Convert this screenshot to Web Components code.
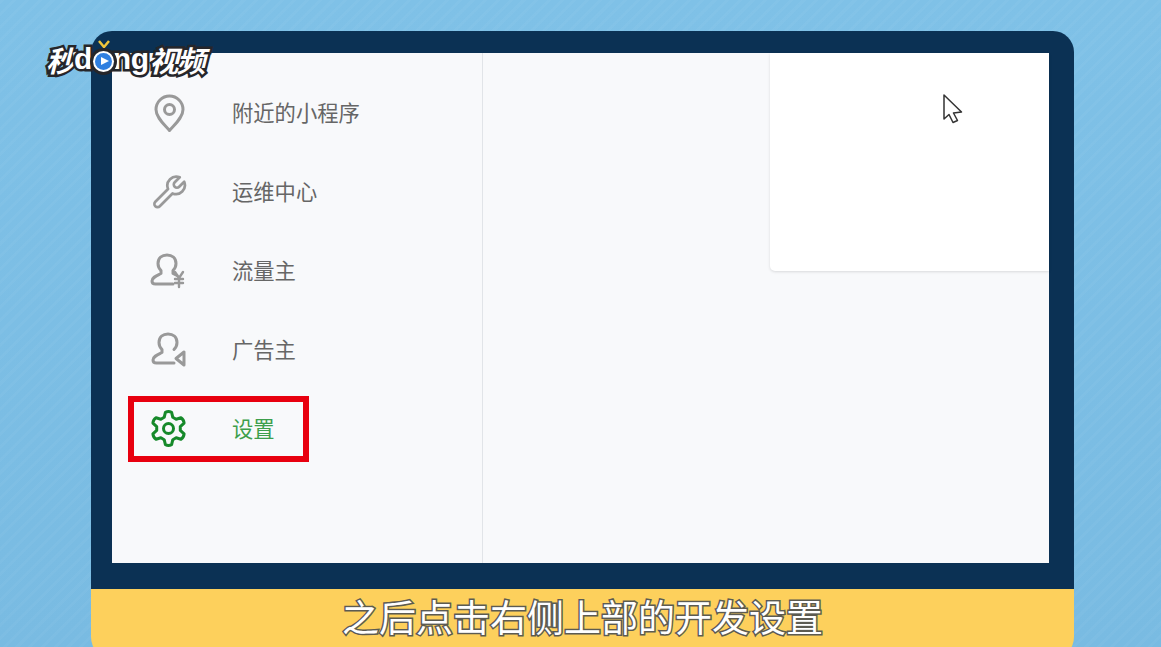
<!DOCTYPE html>
<html lang="zh-CN">
<head>
<meta charset="utf-8">
<title>设置</title>
<style>
  html, body { margin: 0; height: 647px; overflow: hidden; }
  body {
    background:
      repeating-linear-gradient(135deg, rgba(255,255,255,.03) 0 3px, rgba(255,255,255,0) 3px 9px),
      linear-gradient(180deg, #7fc1e7, #79bbe2);
    font-family: "Noto Sans CJK SC", "Liberation Sans", sans-serif;
  }
</style>
</head>
<body>

<video-stage>
  <brand-logo slot="logo"></brand-logo>
  <device-frame>
    <side-nav slot="side">
      <nav-item icon="pin">附近的小程序</nav-item>
      <nav-item icon="wrench">运维中心</nav-item>
      <nav-item icon="flow">流量主</nav-item>
      <nav-item icon="ad">广告主</nav-item>
      <nav-item icon="gear" active marked>设置</nav-item>
    </side-nav>
    <main-panel slot="main"></main-panel>
  </device-frame>
  <sub-title>之后点击右侧上部的开发设置</sub-title>
</video-stage>

<script>
// six lobes, round like the wechat settings gear
function gearPath(cx, cy, outer, inner) {
  let d = '';
  for (let i = 0; i < 6; i++) {
    const a = (i * 60 - 30) * Math.PI / 180;
    const pt = (ang, r) => (cx + r * Math.cos(ang)).toFixed(1) + ' ' + (cy + r * Math.sin(ang)).toFixed(1);
    const step = 11 * Math.PI / 180;
    d += (i === 0 ? 'M' : 'L') + pt(a - step * 1.9, inner);
    d += ' L' + pt(a - step, outer) + ' Q' + pt(a, outer + 1.2) + ' ' + pt(a + step, outer);
    d += ' L' + pt(a + step * 1.9, inner) + ' ';
  }
  return d + 'Z';
}

const personPath = 'M25 33H7.5Q4 33 4 30C4 26.5 8 25 13 22.5V19.5C11 17.5 10 15 10 12.5C10 7 14 4 19 4S28 7 28 12.5C28 15 27 17.5 25 19.5V22.5L29 24.5';

const ICONS = {
  pin: `<path d="M21.5 37.5C17 32 8 25 8 16.5A13.5 13.5 0 0 1 35 16.5C35 25 26 32 21.5 37.5Z"/><circle cx="21.5" cy="16.5" r="5"/>`,
  wrench: `<g transform="translate(21 20.5) rotate(45) scale(.9) translate(0 -2)"><path d="M-3.5 -18.4V-10.5A3.5 3.5 0 0 0 3.5 -10.5V-18.4A10 10 0 0 1 3.5 0V20A3.5 3.5 0 0 1 -3.5 20V0A10 10 0 0 1 -3.5 -18.4Z"/></g>`,
  flow: `<path d="${personPath}"/><path d="M27 21L31 27L35 21M31 27V36M27 28H35M27 32H35" stroke-width="2.4"/>`,
  ad: `<g transform="translate(1 0)"><path d="M25 33H7.5Q4 33 4 30C4 26.5 8 25 13 22.5V19.5C11 17.5 10 15 10 12.5C10 7 14 4 19 4S28 7 28 12.5C28 15 27 17.5 25 19.5"/></g><path d="M36 22V35L28 28.5Z"/>`,
  gear: `<path d="${gearPath(20.5, 19.5, 16.5, 12)}"/><circle cx="20.5" cy="19.5" r="5"/>`
};

class VideoStage extends HTMLElement {
  constructor() {
    super();
    this.attachShadow({ mode: 'open' });
    this.shadowRoot.innerHTML = `
      <style>
        :host { display: block; position: relative; height: 647px; padding: 31px 87px 0 91px; box-sizing: border-box; overflow: hidden; }
        .logo { position: absolute; left: 44px; top: 38px; z-index: 2; }
      </style>
      <div class="logo"><slot name="logo"></slot></div>
      <slot></slot>
    `;
  }
}

class DeviceFrame extends HTMLElement {
  constructor() {
    super();
    this.attachShadow({ mode: 'open' });
    this.shadowRoot.innerHTML = `
      <style>
        :host { display: block; background: #0b3154; border-radius: 21px 21px 0 0; padding: 22px 25px 26px 21px; }
        .screen { display: flex; height: 510px; background: #f8f9fb; }
      </style>
      <div class="screen">
        <slot name="side"></slot>
        <slot name="main"></slot>
      </div>
    `;
  }
}

class SideNav extends HTMLElement {
  constructor() {
    super();
    this.attachShadow({ mode: 'open' });
    this.shadowRoot.innerHTML = `
      <style>
        :host { display: flex; flex-direction: column; box-sizing: border-box; width: 371px; padding-top: 20px; border-right: 1px solid #e1e4e8; }
      </style>
      <slot></slot>
    `;
  }
}

class NavItem extends HTMLElement {
  constructor() {
    super();
    this.attachShadow({ mode: 'open' });
  }

  connectedCallback() {
    const icon = ICONS[this.getAttribute('icon')];
    this.shadowRoot.innerHTML = `
      <style>
        :host { display: flex; align-items: center; position: relative; height: 79.2px; padding-left: 36px; gap: 44px; font-size: 21.3px; color: #666; }
        :host([active]) { color: #3d9f4c; }
        svg { width: 40px; height: 40px; fill: none; stroke: #999; stroke-width: 3; stroke-linejoin: round; stroke-linecap: round; flex: none; filter: blur(.3px); }
        :host([active]) svg { stroke: #16892a; }
        span { margin-top: -3px; }
        .mark { position: absolute; left: 16px; top: 6px; width: 181px; height: 66px; box-sizing: border-box; border: 6px solid #e8000f; }
      </style>
      <svg viewBox="0 0 40 40">${icon}</svg>
      <span><slot></slot></span>
      ${this.hasAttribute('marked') ? '<div class="mark"></div>' : ''}
    `;
  }
}

class MainPanel extends HTMLElement {
  constructor() {
    super();
    this.attachShadow({ mode: 'open' });
    this.shadowRoot.innerHTML = `
      <style>
        :host { display: flex; justify-content: flex-end; align-items: flex-start; flex: 1; position: relative; }
        .card { width: 279px; height: 218px; background: #fff; border-radius: 0 0 0 5px; box-shadow: 0 1px 3px rgba(0,0,0,.13); }
        svg { position: absolute; left: 460px; top: 41px; width: 20px; height: 30px; }
      </style>
      <div class="card"></div>
      <svg viewBox="0 0 20 30"><path d="M1 1V25L6 20.5L10 28.5L14.5 26.5L10.5 19L18.5 18Z" fill="#fff" stroke="#333" stroke-width="1.5" stroke-linejoin="round"/></svg>
    `;
  }
}

class SubTitle extends HTMLElement {
  constructor() {
    super();
    this.attachShadow({ mode: 'open' });
    this.shadowRoot.innerHTML = `
      <style>
        :host { display: flex; justify-content: center; align-items: flex-start; box-sizing: border-box; height: 70px; background: #fdd05c; border-radius: 0 0 22px 22px; font-size: 37px; line-height: 54px; color: #fff; -webkit-text-stroke: 3px #5c5b52; paint-order: stroke fill; white-space: nowrap; }
      </style>
      <slot></slot>
    `;
  }
}

class BrandLogo extends HTMLElement {
  constructor() {
    super();
    this.attachShadow({ mode: 'open' });
    this.shadowRoot.innerHTML = `
      <style>
        :host { display: inline-flex; align-items: center; height: 42px; color: #fff; font-style: italic; font-weight: 700; font-size: 29px; line-height: 42px; white-space: nowrap; -webkit-text-stroke: 5px #26262a; paint-order: stroke fill; }
        .en { font-family: "Liberation Sans", sans-serif; font-style: normal; font-size: 30px; letter-spacing: -.5px; }
        .cn { font-family: "Noto Sans CJK SC", sans-serif; letter-spacing: -2px; }
        .first { margin: 0 1px 0 2px; }
        .last { margin-left: 1px; }
        .dot { position: relative; flex: none; width: 17px; height: 17px; margin: 5px 1px 0 3px; border-radius: 50%; background: #2f7fe0; box-shadow: 0 0 0 2px #fff, 0 0 0 5px #26262a; }
        .dot::before { content: ""; position: absolute; left: 6px; top: 4px; border-left: 8px solid #fff; border-top: 4.5px solid transparent; border-bottom: 4.5px solid transparent; }
        .tick { position: absolute; left: 3px; top: -13px; width: 12px; height: 8px; }
      </style>
      <span class="cn first">秒</span>
      <span class="en">d</span>
      <span class="dot"><svg class="tick" viewBox="0 0 12 8"><path d="M1 1L6 7L11 1" fill="none" stroke="#f0c53a" stroke-width="2.5"/></svg></span>
      <span class="en">ng</span>
      <span class="cn last">视频</span>
    `;
  }
}

customElements.define('video-stage', VideoStage);
customElements.define('device-frame', DeviceFrame);
customElements.define('side-nav', SideNav);
customElements.define('nav-item', NavItem);
customElements.define('main-panel', MainPanel);
customElements.define('sub-title', SubTitle);
customElements.define('brand-logo', BrandLogo);
</script>
</body>
</html>
